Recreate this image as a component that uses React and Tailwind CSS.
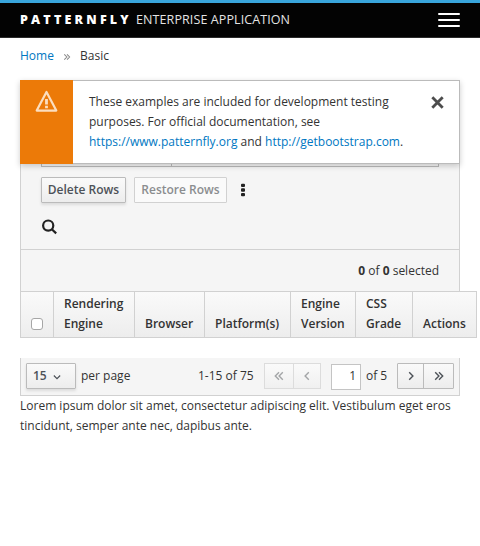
import React from 'react';

const raised =
  'border border-[#bbb] bg-linear-to-b from-[#fafafa] to-[#ededed] text-[#4d5258]';

function Chevron({ double = false, flip = false, className = '' }) {
  return (
    <svg
      width="10"
      height="10"
      viewBox="0 0 10 10"
      fill="none"
      stroke="currentColor"
      strokeWidth="1.4"
      className={`${flip ? 'rotate-180' : ''} ${className}`}
    >
      {double ? (
        <path d="M1.2 1.3 L4.9 5 L1.2 8.7 M5 1.3 L8.7 5 L5 8.7" />
      ) : (
        <path d="M3.2 1.3 L6.9 5 L3.2 8.7" />
      )}
    </svg>
  );
}

function Header() {
  return (
    <header className="flex h-[38px] items-center justify-between border-t-[3px] border-b border-t-[#39a5dc] border-b-[#2b2b2b] bg-[#030303] px-5 text-white">
      <div className="flex items-baseline whitespace-nowrap">
        <span className="w-[116px] text-[12.5px] font-extrabold tracking-[3.2px]">PATTERNFLY</span>
        <span className="text-[12.5px] font-normal tracking-[0.1px] text-[#e4e4e4]">ENTERPRISE APPLICATION</span>
      </div>
      <div className="flex w-[22px] flex-col gap-1">
        <span className="h-0.5 rounded-[1px] bg-white" />
        <span className="h-0.5 rounded-[1px] bg-white" />
        <span className="h-0.5 rounded-[1px] bg-white" />
      </div>
    </header>
  );
}

function Toast() {
  return (
    <div className="absolute inset-x-0 top-0 flex h-[84px] border border-l-0 border-[#bbb] bg-white shadow-[0_2px_6px_rgba(3,3,3,0.2)]">
      <div className="-my-px flex w-[53px] shrink-0 justify-center bg-[#ec7a08] pt-[9px]">
        <svg width="24" height="24" viewBox="0 0 24 24" fill="none" className="text-[#fbdebf]">
          <path d="M11.5 3 L21.3 21.6 H1.7 Z" stroke="currentColor" strokeWidth="2.2" strokeLinejoin="round" />
          <path d="M11.5 10 V15.4 M11.5 16.8 V19.2" stroke="currentColor" strokeWidth="2.8" />
        </svg>
      </div>
      <p className="w-[320px] shrink-0 pt-[11px] pl-4 whitespace-nowrap">
        These examples are included for development testing
        <br />
        purposes. For official documentation, see
        <br />
        <a className="text-[#0077c2]">https://www.patternfly.org</a> and{' '}
        <a className="text-[#0077c2]">http://getbootstrap.com</a>.
      </p>
      <svg
        width="13"
        height="13"
        viewBox="0 0 13 13"
        className="mt-[15px] mr-[15px] ml-auto text-[#4d4d4d]"
        stroke="currentColor"
        strokeWidth="2.8"
      >
        <path d="M1.3 1.3 L11.7 11.7 M11.7 1.3 L1.3 11.7" />
      </svg>
    </div>
  );
}

function Toolbar() {
  return (
    <section className="h-[211px] border-x border-[#d1d1d1] bg-[#f5f5f5]">
      <div className="flex h-[170px] flex-col border-b border-[#d1d1d1] px-5 pt-[61px]">
        <div className="flex h-[26px] shrink-0 border border-[#bbb] bg-[#f5f5f5]">
          <div className="w-[130px] border-r border-[#bbb]" />
        </div>
        <div className="mt-[10px] flex h-[26px] shrink-0 items-center font-semibold">
          <button className={`h-[26px] w-[85px] rounded-[1px] pb-px shadow-[0_2px_3px_rgba(3,3,3,0.1)] ${raised}`}>
            Delete Rows
          </button>
          <button className="ml-2 h-[26px] w-[93px] rounded-[1px] border border-[#d1d1d1] bg-[#fafafa] pb-px text-[#8b8d8f]">
            Restore Rows
          </button>
          <svg width="4" height="14" viewBox="0 0 4 14" fill="#222" className="mb-px ml-[14px]">
            <rect y="0.7" width="4" height="3.4" rx="1" />
            <rect y="5.3" width="4" height="3.4" rx="1" />
            <rect y="9.9" width="4" height="3.4" rx="1" />
          </svg>
        </div>
        <svg
          width="16"
          height="16"
          viewBox="0 0 16 16"
          fill="none"
          stroke="#222"
          strokeWidth="2.2"
          className="mt-4 ml-px shrink-0"
        >
          <circle cx="6.2" cy="6.6" r="5.1" />
          <path d="M9.8 10.3 L14.2 14.4" />
        </svg>
      </div>
      <p className="pt-[11px] pr-5 text-right">
        <b>0</b> of <b>0</b> selected
      </p>
    </section>
  );
}

const columns = [
  { lines: ['Rendering', 'Engine'], width: 'w-[81px]' },
  { lines: ['Browser'], width: 'w-[70px]' },
  { lines: ['Platform(s)'], width: 'w-[86px]' },
  { lines: ['Engine', 'Version'], width: 'w-[65px]' },
  { lines: ['CSS', 'Grade'], width: 'w-[57px]' },
  { lines: ['Actions'], width: 'w-[64px]' },
];

function TableHead() {
  return (
    <div className="flex h-[47px] w-[457px] border border-r-0 border-[#d1d1d1] bg-linear-to-b from-[#fafafa] to-[#ededed] font-semibold">
      <div className="flex w-[33px] items-end border-r border-[#d1d1d1] pb-[7px] pl-[10px]">
        <input
          type="checkbox"
          aria-label="Select all rows"
          className="h-3 w-3 appearance-none rounded-[3px] border border-[#a6a6a6] bg-white"
        />
      </div>
      {columns.map(({ lines, width }) => (
        <div
          key={lines.join(' ')}
          className={`flex shrink-0 flex-col justify-end border-r border-[#d1d1d1] pb-[3px] pl-[10px] whitespace-nowrap ${width}`}
        >
          {lines.map((line) => (
            <span key={line}>{line}</span>
          ))}
        </div>
      ))}
    </div>
  );
}

function Pager() {
  return (
    <div className="mt-5 flex h-[38px] items-start border border-t-0 border-[#d1d1d1] bg-[#f5f5f5] pt-[5px] pr-[5px] pl-[5px] leading-[26px] whitespace-nowrap">
      <button
        className={`flex h-[26px] w-[50px] items-center rounded-[1px] pl-[6px] font-semibold shadow-[0_2px_3px_rgba(3,3,3,0.1)] ${raised}`}
      >
        15
        <Chevron className="mt-px ml-[5px] rotate-90 scale-[0.85]" />
      </button>
      <span className="ml-[5px]">per page</span>
      <span className="ml-auto w-[66px]">1-15 of 75</span>
      <div className="flex h-[26px] w-[57px] border border-[#dcdcdc] bg-linear-to-b from-[#fafafa] to-[#f0f0f0] text-[#a3a5a7]">
        <button className="flex w-[29px] items-center justify-center border-r border-[#dcdcdc]">
          <Chevron double flip />
        </button>
        <button className="flex flex-1 items-center justify-center">
          <Chevron flip />
        </button>
      </div>
      <div className="mt-px ml-[10px] h-[26px] w-[30px] border border-[#c4c4c4] bg-white pr-1 text-right leading-[22px]">1</div>
      <span className="ml-[5px] w-[31px]">of 5</span>
      <div className={`flex h-[26px] w-[57px] rounded-[1px] ${raised}`}>
        <button className="flex w-[26px] items-center justify-center border-r border-[#bbb]">
          <Chevron />
        </button>
        <button className="flex flex-1 items-center justify-center">
          <Chevron double />
        </button>
      </div>
    </div>
  );
}

export default function App() {
  return (
    <div className="h-[546px] w-[480px] overflow-hidden bg-white font-['Open_Sans',sans-serif] text-[12px] leading-5 text-[#333]">
      <Header />
      <main className="px-5">
        <nav className="flex h-[42px] items-center pb-[6px]">
          <a className="w-[43px] text-[#0077c2]">Home</a>
          <Chevron double className="mt-px w-[8px] scale-[0.9] text-[#888]" />
          <span className="ml-[9px]">Basic</span>
        </nav>
        <div className="relative">
          <Toolbar />
          <Toast />
        </div>
        <TableHead />
        <Pager />
        <p className="whitespace-nowrap">
          Lorem ipsum dolor sit amet, consectetur adipiscing elit. Vestibulum eget eros
          <br />
          tincidunt, semper ante nec, dapibus ante.
        </p>
      </main>
    </div>
  );
}
